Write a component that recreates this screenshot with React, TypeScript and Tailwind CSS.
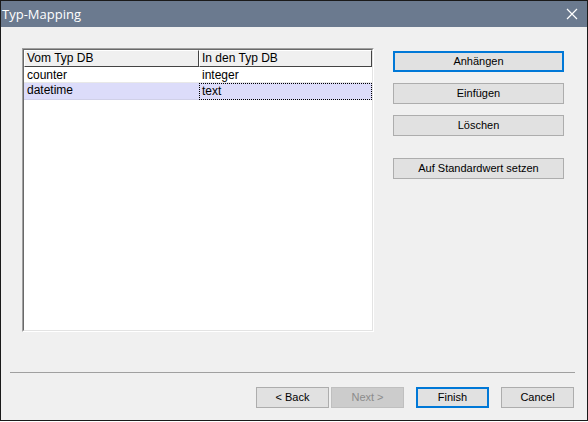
import React from "react";

const font = { fontFamily: '"Liberation Sans", Arial, sans-serif' };

function Btn({ label, primary, disabled, className }: { label: string; primary?: boolean; disabled?: boolean; className?: string }) {
  return (
    <div
      className={
        "flex items-center justify-center text-[11px] " +
        (primary
          ? "border-2 border-[#0078d7] bg-[#e1e1e1] text-black "
          : disabled
          ? "border border-[#bfbfbf] bg-[#cccccc] text-[#8b8b8b] "
          : "border border-[#adadad] bg-[#e1e1e1] text-black ") +
        (className ?? "")
      }
    >
      {label}
    </div>
  );
}

export default function App() {
  return (
    <div className="w-[588px] h-[422px] bg-white" style={font}>
      <div className="w-[588px] h-[421px] border border-[#1a1a1a] bg-[#f0f0f0] flex flex-col">
        <div className="h-[26px] bg-[#6b7a8f] flex items-center justify-between pl-[1px] pr-[8px]">
          <span className="text-white text-[13px] leading-none" style={{ fontFamily: '"Open Sans", "Liberation Sans", sans-serif' }}>Typ-Mapping</span>
          <svg width="12" height="12" viewBox="0 0 12 12" className="mr-[1px]">
            <path d="M1 1 L11 11 M11 1 L1 11" stroke="white" strokeWidth="1.2" />
          </svg>
        </div>
        <div className="flex-1 flex flex-col">
          <div className="flex pt-[21px] pl-[21px] pr-[23px]">
            <div className="w-[352px] h-[284px] border-t border-l border-[#a0a0a0] border-b border-r border-b-white border-r-white">
              <div className="w-full h-full border-t border-l border-[#696969] border-b border-r border-b-[#e3e3e3] border-r-[#e3e3e3] bg-white">
                <div className="flex h-[17px] text-[12px] leading-[15px]">
                  <div className="w-[175px] border border-t-white border-l-white border-r-[#444] border-b-[#444] bg-[#f0f0f0] pl-[2px] text-black">Vom Typ DB</div>
                  <div className="w-[173px] border border-t-white border-l-white border-r-[#444] border-b-[#444] bg-[#f0f0f0] pl-[2px] text-black">In den Typ DB</div>
                </div>
                <div className="flex h-[16px] text-[12px] leading-[16px] border-b border-[#e8e8e8]">
                  <div className="w-[175px] pl-[3px]">counter</div>
                  <div className="w-[173px] pl-[3px]">integer</div>
                </div>
                <div className="flex h-[17px] text-[12px] leading-[15px] bg-[#dcdcfa]">
                  <div className="w-[175px] pl-[3px] border-b border-[#d0d0e8]">datetime</div>
                  <div className="w-[173px] pl-[2px] border border-dotted border-black">text</div>
                </div>
              </div>
            </div>
            <div className="ml-auto mt-[3px] flex flex-col w-[171px]">
              <Btn label="Anhängen" primary className="h-[21px]" />
              <Btn label="Einfügen" className="h-[21px] mt-[11px]" />
              <Btn label="Löschen" className="h-[21px] mt-[11px]" />
              <Btn label="Auf Standardwert setzen" className="h-[21px] mt-[22px]" />
            </div>
          </div>
          <div className="mt-auto">
            <div className="mx-[9px] mr-[12px] h-[1px] bg-[#a0a0a0]" />
            <div className="flex justify-end pr-[13px] pt-[14px] pb-[12px]">
              <Btn label="< Back" className="w-[73px] h-[21px]" />
              <Btn label="Next >" disabled className="w-[73px] h-[21px] ml-[2px]" />
              <Btn label="Finish" primary className="w-[73px] h-[21px] ml-[12px]" />
              <Btn label="Cancel" className="w-[73px] h-[21px] ml-[12px]" />
            </div>
          </div>
        </div>
      </div>
    </div>
  );
}
